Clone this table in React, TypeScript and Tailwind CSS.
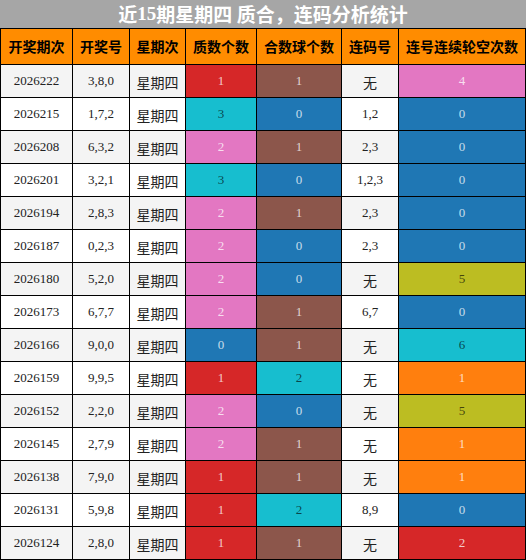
const RED = "bg-[#d62728]";
const BROWN = "bg-[#8c564b]";
const PINK = "bg-[#e377c2]";
const CYAN = "bg-[#17becf]";
const BLUE = "bg-[#1f77b4]";
const OLIVE = "bg-[#bcbd22]";
const ORANGE = "bg-[#ff7f0e]";

type Cell = [string, string];

const rows: [string, string, Cell, Cell, string, Cell][] = [
  ["2026222", "3,8,0", ["1", RED], ["1", BROWN], "无", ["4", PINK]],
  ["2026215", "1,7,2", ["3", CYAN], ["0", BLUE], "1,2", ["0", BLUE]],
  ["2026208", "6,3,2", ["2", PINK], ["1", BROWN], "2,3", ["0", BLUE]],
  ["2026201", "3,2,1", ["3", CYAN], ["0", BLUE], "1,2,3", ["0", BLUE]],
  ["2026194", "2,8,3", ["2", PINK], ["1", BROWN], "2,3", ["0", BLUE]],
  ["2026187", "0,2,3", ["2", PINK], ["0", BLUE], "2,3", ["0", BLUE]],
  ["2026180", "5,2,0", ["2", PINK], ["0", BLUE], "无", ["5", OLIVE]],
  ["2026173", "6,7,7", ["2", PINK], ["1", BROWN], "6,7", ["0", BLUE]],
  ["2026166", "9,0,0", ["0", BLUE], ["1", BROWN], "无", ["6", CYAN]],
  ["2026159", "9,9,5", ["1", RED], ["2", CYAN], "无", ["1", ORANGE]],
  ["2026152", "2,2,0", ["2", PINK], ["0", BLUE], "无", ["5", OLIVE]],
  ["2026145", "2,7,9", ["2", PINK], ["1", BROWN], "无", ["1", ORANGE]],
  ["2026138", "7,9,0", ["1", RED], ["1", BROWN], "无", ["1", ORANGE]],
  ["2026131", "5,9,8", ["1", RED], ["2", CYAN], "8,9", ["0", BLUE]],
  ["2026124", "2,8,0", ["1", RED], ["1", BROWN], "无", ["2", RED]],
];

const headers = ["开奖期次", "开奖号", "星期次", "质数个数", "合数球个数", "连码号", "连号连续轮空次数"];

const serif = "font-['Liberation_Serif','Noto_Sans_CJK_SC',serif]";
const cjk = "font-['Noto_Sans_CJK_SC',sans-serif]";

const isLight = (bg: string) => bg === CYAN || bg === OLIVE;

const ColorCell = ({ cell }: { cell: Cell }) => (
  <div
    className={`flex items-center justify-center text-[13px] ${serif} ${cell[1]} ${
      isLight(cell[1]) ? "text-black/65" : "text-white/75"
    }`}
  >
    {cell[0]}
  </div>
);

const TextCell = ({ text, bg }: { text: string; bg: string }) => (
  <div
    className={`flex items-center justify-center text-[#222] ${bg} ${
      text === "无" || text === "星期四" ? `${cjk} text-[14px] pt-[2px]` : `${serif} text-[13px]`
    }`}
  >
    {text}
  </div>
);

export default function App() {
  return (
    <div className="flex h-[560px] w-[526px] flex-col bg-black">
      <div
        className={`flex h-[28px] items-center justify-center bg-[#a6a6a6] text-[19px] font-bold text-white ${cjk}`}
      >
        近<span className={serif}>15</span>期星期四 质合，连码分析统计
      </div>
      <div className="grid grid-cols-[71px_56px_55px_70px_84px_56px_126px] grid-rows-[35px_repeat(15,32px)] gap-px p-px pr-0">
        {headers.map((h) => (
          <div
            key={h}
            className={`flex items-center justify-center bg-[#ff8c00] text-[14px] font-bold text-black ${cjk}`}
          >
            {h}
          </div>
        ))}
        {rows.map((r, i) => {
          const bg = i % 2 === 0 ? "bg-[#f4f4f4]" : "bg-white";
          return [
            <TextCell key={`a${i}`} text={r[0]} bg={bg} />,
            <TextCell key={`b${i}`} text={r[1]} bg={bg} />,
            <TextCell key={`c${i}`} text="星期四" bg={bg} />,
            <ColorCell key={`d${i}`} cell={r[2]} />,
            <ColorCell key={`e${i}`} cell={r[3]} />,
            <TextCell key={`f${i}`} text={r[4]} bg={bg} />,
            <ColorCell key={`g${i}`} cell={r[5]} />,
          ];
        })}
      </div>
    </div>
  );
}
